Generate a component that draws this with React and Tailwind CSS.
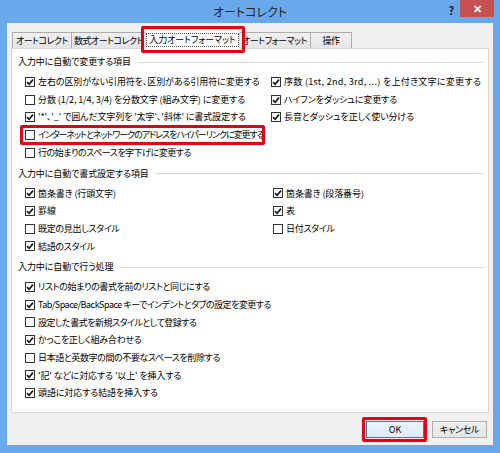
import React from "react";

const font = "[font-family:'Noto_Sans_CJK_JP',sans-serif] [font-feature-settings:'palt']";

const Box = ({ on }) => (
  <span className="flex h-[10px] w-[10px] shrink-0 items-center justify-center border border-[#333333] bg-white">
    {on && (
      <svg viewBox="0 0 8 8" className="h-[8px] w-[8px]">
        <path d="M1 4.2 L3.1 6.3 L7 1.6" fill="none" stroke="#1a1a1a" strokeWidth="1.7" />
      </svg>
    )}
  </span>
);

const Row = ({ on, label, mark, tight = "" }) => (
  <div className="relative flex h-[17.7px] items-center gap-[3px]">
    <Box on={on} />
    <span className={`whitespace-nowrap ${tight}`}>{label}</span>
    {mark && (
      <span className="pointer-events-none absolute -top-[1px] -bottom-[1px] -left-[5px] right-[6px] rounded-[2px] border-[3px] border-[#e60012]" />
    )}
  </div>
);

const Heading = ({ children }) => (
  <div className="flex h-[22px] items-center gap-[7px] pl-[6px] pr-[5px]">
    <span className="whitespace-nowrap">{children}</span>
    <span className="h-px flex-1 bg-[#dcdcdc]" />
  </div>
);

const Tab = ({ children, w }) => (
  <div
    className={`flex h-[16px] items-center justify-center whitespace-nowrap border border-b-0 border-[#acacac] bg-gradient-to-b from-[#f0f0f0] to-[#e5e5e5] tracking-[-0.5px] -ml-px ${w}`}
  >
    {children}
  </div>
);

export default function App() {
  return (
    <div className={`flex h-[453px] w-[500px] flex-col bg-[#6aa8ec] text-[9px] tracking-[-0.1px] text-black ${font}`}>
      <div className="relative flex h-[23px] shrink-0 items-center justify-center">
        <span className="text-[12px] tracking-normal text-[#1f1f1f]">オートコレクト</span>
        <span className="absolute top-[2px] right-[46px] text-[11px] font-bold text-[#1f1f1f]">?</span>
        <span className="absolute top-0 right-[6px] flex h-[17px] w-[34px] items-center justify-center bg-[#c75050] text-[11px] font-bold text-white">
          ✕
        </span>
      </div>

      <div className="mx-[7px] mb-[8px] flex flex-1 flex-col bg-[#f0f0f0] px-[4px] pt-[8px]">
        <div className="flex h-[17px] items-end pl-[2px]">
          <Tab w="w-[60px]">オートコレクト</Tab>
          <Tab w="w-[75px]">数式オートコレクト</Tab>
          <div className="relative z-10 -mx-[1px] -mb-px flex h-[20px] w-[95px] items-center justify-center whitespace-nowrap border border-b-0 border-[#d9d9d9] bg-white">
            <span className="border border-dotted border-[#555] px-[2px] leading-[12px]">入力オートフォーマット</span>
            <span className="pointer-events-none absolute -top-[4px] -bottom-[4px] -left-[5px] -right-[6px] rounded-[2px] border-[3px] border-[#e60012]" />
          </div>
          <Tab w="w-[73px]">オートフォーマット</Tab>
          <Tab w="w-[42px]">操作</Tab>
        </div>

        <div className="h-[365px] shrink-0 border border-[#d9d9d9] bg-white pt-[2px]">
          <Heading>入力中に自動で変更する項目</Heading>
          <div className="grid grid-cols-[246px_1fr] pl-[13px]">
            <div>
              <Row on label="左右の区別がない引用符を、区別がある引用符に変更する" />
              <Row label="分数 (1/2, 1/4, 3/4) を分数文字 (組み文字) に変更する" />
              <Row on label="'*'、'_' で囲んだ文字列を '太字'、'斜体' に書式設定する" />
              <Row mark label="インターネットとネットワークのアドレスをハイパーリンクに変更する" tight="tracking-[-1.05px]" />
              <Row label="行の始まりのスペースを字下げに変更する" tight="tracking-[-0.5px]" />
            </div>
            <div>
              <Row on label="序数 (1st, 2nd, 3rd, ...) を上付き文字に変更する" tight="tracking-[0.3px]" />
              <Row on label="ハイフンをダッシュに変更する" />
              <Row on label="長音とダッシュを正しく使い分ける" />
            </div>
          </div>

          <div className="mt-px">
            <Heading>入力中に自動で書式設定する項目</Heading>
            <div className="grid grid-cols-[248px_1fr] pl-[13px]">
              <Row on label="箇条書き (行頭文字)" />
              <Row on label="箇条書き (段落番号)" />
              <Row on label="罫線" />
              <Row on label="表" />
              <Row label="既定の見出しスタイル" tight="tracking-[-0.3px]" />
              <Row label="日付スタイル" tight="tracking-[-0.3px]" />
              <Row on label="結語のスタイル" tight="tracking-[-0.3px]" />
            </div>
          </div>

          <div className="mt-px">
            <Heading>入力中に自動で行う処理</Heading>
            <div className="pl-[13px]">
              <Row on label="リストの始まりの書式を前のリストと同じにする" tight="tracking-[-0.4px]" />
              <Row on label="Tab/Space/BackSpace キーでインデントとタブの設定を変更する" tight="tracking-[-0.5px]" />
              <Row label="設定した書式を新規スタイルとして登録する" tight="tracking-[-0.5px]" />
              <Row on label="かっこを正しく組み合わせる" tight="tracking-[-0.3px]" />
              <Row label="日本語と英数字の間の不要なスペースを削除する" tight="tracking-[-0.4px]" />
              <Row on label="'記' などに対応する '以上' を挿入する" />
              <Row on label="頭語に対応する結語を挿入する" />
            </div>
          </div>
        </div>

        <div className="mt-[8px] flex justify-end gap-[8px] pr-[2px]">
          <div className="relative flex h-[17px] w-[58px] items-center justify-center border border-[#3c7fb1] bg-gradient-to-b from-[#eaf3fb] to-[#dcecfc]">
            OK
            <span className="pointer-events-none absolute -top-[5px] -bottom-[5px] -left-[5px] -right-[4px] rounded-[2px] border-[3px] border-[#e60012]" />
          </div>
          <div className="flex h-[17px] w-[55px] items-center justify-center border border-[#adadad] bg-gradient-to-b from-[#f0f0f0] to-[#e5e5e5] tracking-[-0.3px]">
            キャンセル
          </div>
        </div>
      </div>
    </div>
  );
}
